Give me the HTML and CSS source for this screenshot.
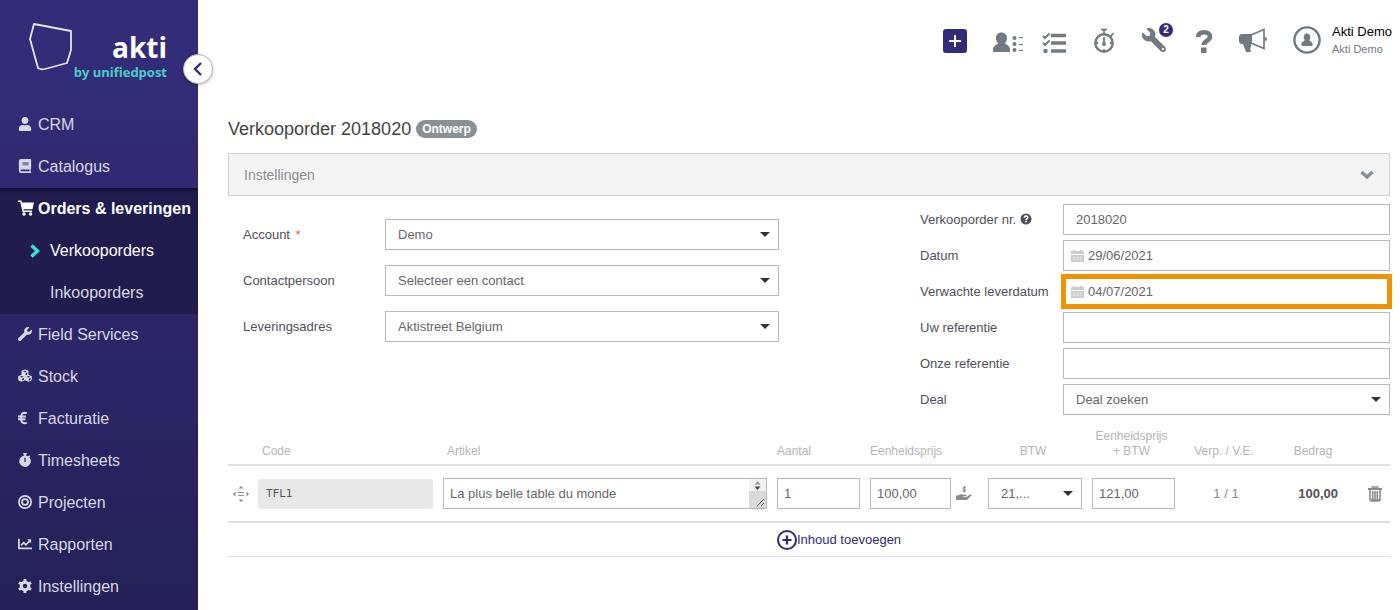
FILE: index.html
```html
<!DOCTYPE html>
<html lang="nl">
<head>
    <meta charset="UTF-8">
    <meta name="viewport" content="width=device-width, initial-scale=1.0">
    <title>Verkooporder 2018020</title>
    <link rel="stylesheet" href="styles.css">
</head>
<body>
    <aside class="sidebar">
        <a href="#" class="logo">
            <svg class="logo-shape" width="44" height="50" viewBox="0 0 44 50"><path d="M5 2 42 9v19l-4 13-22 6q-4 1-7-1L1 17z" fill="none" stroke="#e6e5f0" stroke-width="1.800" stroke-linejoin="round"/></svg>
            <span class="logo-text">
                <span class="logo-name">akti</span>
                <span class="logo-sub">by unifiedpost</span>
            </span>
        </a>
        <button type="button" class="sidebar-toggle" aria-label="Menu inklappen">
            <svg width="10" height="14" viewBox="0 0 10 14"><path d="M8 1 2 7l6 6" fill="none" stroke="#322b78" stroke-width="2.400"/></svg>
        </button>
        <nav>
            <ul class="menu">
                <li><a href="#">
                    <svg class="menu-icon" viewBox="0 0 448 512"><path d="M224 256c70.700 0 128-57.300 128-128S294.700 0 224 0 96 57.300 96 128s57.300 128 128 128zm89.600 32h-16.700c-22.200 10.200-46.900 16-72.900 16s-50.600-5.800-72.900-16h-16.700C60.200 288 0 348.200 0 422.400V464c0 26.500 21.500 48 48 48h352c26.500 0 48-21.500 48-48v-41.600c0-74.200-60.200-134.400-134.400-134.400z"/></svg>
                    CRM</a></li>
                <li><a href="#">
                    <svg class="menu-icon" viewBox="0 0 14 16"><path fill-rule="evenodd" d="M2.500 0H14v11.500l-.6.500v2l.6.500V16H2.500A2.500 2.500 0 0 1 0 13.500v-11A2.500 2.500 0 0 1 2.500 0zM4 4v1h7V4zm0 2.200v1h7v-1zM3 12a1 1 0 0 0 0 2h9v-2z"/></svg>
                    Catalogus</a></li>
                <li class="menu-open">
                    <a href="#" class="menu-active">
                        <svg class="menu-icon" viewBox="0 0 16 16"><path d="M0 .5h3.400l.5 2H16l-1.600 6.700H5.400l.3 1.300h8.400v1.500H4.500L2.300 2H0z"/><circle cx="6" cy="14" r="1.700"/><circle cx="12.600" cy="14" r="1.700"/></svg>
                        Orders &amp; leveringen</a>
                    <ul class="submenu">
                        <li><a href="#" class="submenu-active">
                            <svg width="10" height="14" viewBox="0 0 10 14"><path d="M1.500 1.500 7.500 7l-6 5.500" fill="none" stroke="#40e0d0" stroke-width="3.400"/></svg>
                            Verkooporders</a></li>
                        <li><a href="#">Inkooporders</a></li>
                    </ul>
                </li>
                <li><a href="#">
                    <svg class="menu-icon" viewBox="0 0 512 512"><path d="M507.730 109.100c-2.240-9.030-13.540-12.090-20.120-5.510l-74.360 74.360-67.880-11.310-11.310-67.880 74.360-74.360c6.620-6.620 3.430-17.900-5.660-20.160-47.380-11.740-99.550.91-136.580 37.930-39.640 39.640-50.550 97.100-34.050 147.200L18.740 402.760c-24.990 24.990-24.990 65.510 0 90.500 24.990 24.990 65.510 24.990 90.500 0l213.210-213.210c50.120 16.710 107.470 5.680 147.370-34.220 37.070-37.070 49.700-89.320 37.910-136.730z"/></svg>
                    Field Services</a></li>
                <li><a href="#">
                    <svg class="menu-icon" viewBox="0 0 16 16"><path fill-rule="evenodd" d="M8 .5 12 2v4.600l3.800 1.600v4.600L12 14.600l-4-1.800-4 1.800-3.800-1.800V8.200L4 6.600V2zM8 2 5.700 2.900 8 3.800l2.300-.9zm.7 3v2.200l2-.9V4.100zM4.200 8 2 8.900l2.200.9 2.200-.9zm.6 3v2.200l2-.9v-2.200zm7-3-2.200.9 2.200.9 2.200-.9zm.6 3v2.200l2-.9v-2.200z"/></svg>
                    Stock</a></li>
                <li><a href="#">
                    <svg class="menu-icon" viewBox="0 0 16 16"><path d="M10 2.800A5 5 0 0 0 7.500 2C5 2 3.500 4.500 3.500 8s1.500 6 4 6a5 5 0 0 0 2.500-.8M0 6.300h9M0 9.500h8.500" fill="none" stroke="currentColor" stroke-width="2.300"/></svg>
                    Facturatie</a></li>
                <li><a href="#">
                    <svg class="menu-icon" viewBox="0 0 14 16"><path fill-rule="evenodd" d="M5 0h4v1.600H8v1.200l2.600.9 1.200-1.200 1.100 1.100-1 1.200A6.600 6.600 0 1 1 6 2.800V1.600H5zm1.300 5.500v4.800h1.400V5.500z"/></svg>
                    Timesheets</a></li>
                <li><a href="#">
                    <svg class="menu-icon" viewBox="0 0 16 16"><g fill="none" stroke="currentColor" stroke-width="2"><circle cx="8" cy="8" r="7"/><circle cx="8" cy="8" r="3.400"/></g></svg>
                    Projecten</a></li>
                <li><a href="#">
                    <svg class="menu-icon" viewBox="0 0 16 16"><path d="M1 2v11h15M3.500 9.500 6.500 6.500l2.500 2.500 4.500-4.500" fill="none" stroke="currentColor" stroke-width="2"/><path d="M10.500 2.500H15V7z"/></svg>
                    Rapporten</a></li>
                <li><a href="#">
                    <svg class="menu-icon" viewBox="0 0 16 16"><circle cx="8" cy="8" r="4.300" fill="none" stroke="currentColor" stroke-width="3.600"/><path d="M8 0v3M8 13v3M1.100 4l2.600 1.500M12.300 10.500l2.600 1.500M1.100 12l2.600-1.500M12.300 5.500 14.900 4" stroke="currentColor" stroke-width="3.400"/></svg>
                    Instellingen</a></li>
            </ul>
        </nav>
    </aside>

    <div class="content">
        <header class="topbar">
            <button type="button" class="top-button" aria-label="Nieuw">
                <svg width="50" height="40" viewBox="0 0 50 40"><rect x="13" y="9" width="24" height="24" rx="3" fill="#322b78"/><path d="M25 15v12M19 21h12" stroke="#fff" stroke-width="2"/></svg>
            </button>
            <button type="button" class="top-button" aria-label="Contacten">
                <svg width="50" height="40" viewBox="0 0 50 40"><path d="M21.500 12.500c3.500 0 5.500 2.400 5.500 5.500 0 2.500-.8 4-2 5.200.5 1.300 5 2.200 5 6V31c0 .6-.4 1-1 1H14c-.6 0-1-.4-1-1v-1.800c0-3.800 4.500-4.700 5-6-1.200-1.200-2-2.700-2-5.200 0-3.100 2-5.500 5.500-5.500z"/><circle cx="34.500" cy="18" r="2"/><circle cx="34.500" cy="24" r="2"/><circle cx="34.500" cy="30" r="2"/><path d="M39 17.500h4M39 24.500h4M39 30.500h4" stroke="currentColor"/></svg>
            </button>
            <button type="button" class="top-button" aria-label="Taken">
                <svg width="50" height="40" viewBox="0 0 50 40"><path d="M21 15.500H36M21 23H36M21 31H36" stroke="currentColor" stroke-width="3.400"/><path d="m13 16 2 2 4.500-4.500M13 23l2 2 4.500-4.500" fill="none" stroke="currentColor" stroke-width="2"/><circle cx="15.500" cy="31" r="2.200"/></svg>
            </button>
            <button type="button" class="top-button" aria-label="Tijdregistratie">
                <svg width="50" height="40" viewBox="0 0 50 40"><circle cx="24" cy="23" r="8.700" fill="none" stroke="currentColor" stroke-width="2.400"/><path d="M21 9.700h6M24 10v4M30.500 16.500l3-3.500M24 17v6M24 29v2M16 23h2M30 23h2" stroke="currentColor" stroke-width="1.800"/><circle cx="24" cy="24" r="2"/></svg>
            </button>
            <button type="button" class="top-button" aria-label="Meldingen">
                <svg width="50" height="40" viewBox="0 0 50 40"><path transform="translate(36 8) scale(-.047 .047)" d="M507.730 109.100c-2.240-9.030-13.540-12.090-20.120-5.510l-74.360 74.360-67.880-11.310-11.310-67.880 74.360-74.360c6.620-6.620 3.430-17.900-5.660-20.160-47.380-11.740-99.550.91-136.580 37.930-39.640 39.640-50.550 97.100-34.050 147.200L18.740 402.760c-24.990 24.990-24.990 65.510 0 90.500 24.990 24.990 65.510 24.990 90.500 0l213.210-213.210c50.120 16.710 107.470 5.680 147.370-34.220 37.070-37.070 49.700-89.320 37.910-136.730zM64 472c-13.250 0-24-10.750-24-24 0-13.260 10.750-24 24-24s24 10.740 24 24c0 13.250-10.750 24-24 24z"/></svg>
                <span class="counter">2</span>
            </button>
            <button type="button" class="top-button" aria-label="Help">
                <svg width="50" height="40" viewBox="0 0 50 40"><path d="M18 17c.3-3.200 2.600-4.800 6-4.800 3.600 0 6 1.700 6 4.500 0 4.300-6.200 3.700-6.200 8.300" fill="none" stroke="currentColor" stroke-width="4.600"/><path d="M21 27.500h5.500V33H21z"/></svg>
            </button>
            <button type="button" class="top-button" aria-label="Nieuws">
                <svg width="50" height="40" viewBox="0 0 50 40"><path d="M11 14h11v10h-1v3l-1 1 1 4h-5l-3-8h-2l-2-2v-6z"/><path d="M21.500 14.800 34 9.500v19l-12.500-5.200" fill="none" stroke="currentColor" stroke-width="1.700"/><path d="M34.500 17c2 0 2.500 1 2.500 2s-.5 2-2.500 2z"/></svg>
            </button>
            <a href="#" class="user">
                <svg width="28" height="28" viewBox="0 0 28 28"><circle cx="14" cy="14" r="12.600" fill="none" stroke="currentColor" stroke-width="2.400"/><path d="M14 7.500c2.200 0 3.300 1.600 3.300 3.500 0 1.300-.4 2.500-1.100 3.200.3.900 3.300 1.200 3.300 4V20h-11v-1.800c0-2.800 3-3.100 3.300-4-.7-.7-1.100-1.900-1.100-3.200 0-1.900 1.100-3.500 3.300-3.500z"/></svg>
                <span class="user-text">
                    <span class="user-name">Akti Demo</span>
                    <span class="user-company">Akti Demo</span>
                </span>
            </a>
        </header>

        <main>
            <div class="title">
                <h1>Verkooporder 2018020</h1>
                <span class="status">Ontwerp</span>
            </div>

            <button type="button" class="panel-toggle">
                Instellingen
                <svg width="14" height="10" viewBox="0 0 14 10"><path d="m1.500 2 5.500 5 5.500-5" fill="none" stroke="#8a9195" stroke-width="3.400"/></svg>
            </button>

            <form>
                <div class="form-columns">
                    <div class="form-left">
                        <label for="account">Account <span class="required">*</span></label>
                        <div class="select">
                            <select id="account"><option>Demo</option></select>
                        </div>
                        <label for="contact">Contactpersoon</label>
                        <div class="select">
                            <select id="contact"><option>Selecteer een contact</option></select>
                        </div>
                        <label for="address">Leveringsadres</label>
                        <div class="select">
                            <select id="address"><option>Aktistreet Belgium</option></select>
                        </div>
                    </div>

                    <div class="form-right">
                        <label for="number">Verkooporder nr.
                            <svg class="help" width="12" height="12" viewBox="0 0 12 12"><circle cx="6" cy="6" r="5.500"/><path d="M4.200 4.700C4.300 3.500 5 3 6 3s1.800.6 1.800 1.500C7.800 5.700 6 5.700 6 7.200M6 8v1.500" fill="none" stroke="#fff" stroke-width="1.500"/></svg>
                        </label>
                        <input type="text" id="number" value="2018020">
                        <label for="date">Datum</label>
                        <div class="date">
                            <svg width="13" height="12" viewBox="0 0 13 12"><path d="M0 1h13v3H0zM2 0h2v2H2zM9 0h2v2H9zM0 5h13v7H0z" fill="#ccc"/><path d="M1 7.500h11M1 9.500h11M3.500 6v5M6.500 6v5M9.500 6v5" stroke="#dedede"/></svg>
                            <input type="text" id="date" value="29/06/2021">
                        </div>
                        <label for="delivery">Verwachte leverdatum</label>
                        <div class="date date-highlight">
                            <svg width="13" height="12" viewBox="0 0 13 12"><path d="M0 1h13v3H0zM2 0h2v2H2zM9 0h2v2H9zM0 5h13v7H0z" fill="#ccc"/><path d="M1 7.500h11M1 9.500h11M3.500 6v5M6.500 6v5M9.500 6v5" stroke="#dedede"/></svg>
                            <input type="text" id="delivery" value="04/07/2021">
                        </div>
                        <label for="your-ref">Uw referentie</label>
                        <input type="text" id="your-ref">
                        <label for="our-ref">Onze referentie</label>
                        <input type="text" id="our-ref">
                        <label for="deal">Deal</label>
                        <div class="select">
                            <select id="deal"><option>Deal zoeken</option></select>
                        </div>
                    </div>
                </div>

                <table class="lines">
                    <colgroup>
                        <col class="col-handle">
                        <col class="col-code">
                        <col>
                        <col class="col-small">
                        <col class="col-price">
                        <col class="col-vat">
                        <col class="col-small">
                        <col class="col-pack">
                        <col class="col-total">
                        <col class="col-delete">
                    </colgroup>
                    <thead>
                        <tr>
                            <th></th>
                            <th class="indent">Code</th>
                            <th class="indent">Artikel</th>
                            <th>Aantal</th>
                            <th>Eenheidsprijs</th>
                            <th class="center">BTW</th>
                            <th class="center">Eenheidsprijs<br>+ BTW</th>
                            <th class="center">Verp. / V.E.</th>
                            <th class="center">Bedrag</th>
                            <th></th>
                        </tr>
                    </thead>
                    <tbody>
                        <tr>
                            <td class="handle">
                                <svg width="16" height="16" viewBox="0 0 16 16"><path d="M8 0l2.500 2.500h-5zM8 16l2.500-2.500h-5zM0 8l2.500-2.500v5zM16 8l-2.500-2.500v5zM5 6h6v1H5zM5 9h6v1H5z"/></svg>
                            </td>
                            <td><input type="text" class="code" value="TFL1" aria-label="Code" readonly></td>
                            <td>
                                <div class="article">
                                    <textarea rows="1" aria-label="Artikel">La plus belle table du monde</textarea>
                                    <svg width="17" height="29" viewBox="0 0 17 29"><path d="M0 0h17v12H0z" fill="#f1f1f1"/><path d="M0 12h17v17H0z" fill="#dadada"/><path d="M5.500 5.500 8.500 2l3 3.500z" fill="#999"/><path d="m5.500 7.500 3 3.500 3-3.500z" fill="#444"/><path d="m8 27 7-7M12 27l3-3" stroke="#555"/></svg>
                                </div>
                            </td>
                            <td><input type="text" value="1" aria-label="Aantal"></td>
                            <td>
                                <div class="price">
                                    <input type="text" value="100,00" aria-label="Eenheidsprijs">
                                    <button type="button" class="icon-button" aria-label="Korting">
                                        <svg width="16" height="16" viewBox="0 0 16 16"><path d="M0 9.500h2.200C3.600 8.300 5 8.200 6.200 8.500l3.800.3c.8.200.8 1.400 0 1.500H7v.6h3.500l3.500-2.400c.9-.5 2 .5 1.200 1.300l-3.700 3.600c-.5.500-1 .7-1.800.7H0z"/><path d="M10 1.500C7.500.8 6 2.600 8 3.300s2 2.500-1.500 1.700M8.200 0v6.500" fill="none" stroke="currentColor" stroke-width="1.100"/></svg>
                                    </button>
                                </div>
                            </td>
                            <td>
                                <div class="select">
                                    <select aria-label="BTW"><option>21,...</option></select>
                                </div>
                            </td>
                            <td><input type="text" value="121,00" aria-label="Eenheidsprijs + BTW"></td>
                            <td class="center pack">1 / 1</td>
                            <td class="total">100,00</td>
                            <td class="delete">
                                <button type="button" class="icon-button" aria-label="Verwijderen">
                                    <svg width="14" height="16" viewBox="0 0 14 16"><path d="M0 2h14v2H0z"/><path d="M4.500 2.500V1h5v1.500M2 4v9.500q0 1.500 1.500 1.500h7q1.500 0 1.500-1.500V4M2 14h10M4.700 5v9M7 5v9M9.300 5v9" fill="none" stroke="currentColor" stroke-width="1.600"/></svg>
                                </button>
                            </td>
                        </tr>
                    </tbody>
                    <tfoot>
                        <tr>
                            <td colspan="3"></td>
                            <td colspan="7">
                                <button type="button" class="add-button">
                                    <svg width="20" height="20" viewBox="0 0 20 20"><circle cx="10" cy="10" r="9" fill="none" stroke="#322b78" stroke-width="2"/><path d="M10 5.500v9M5.500 10h9" stroke="#322b78" stroke-width="2.200"/></svg>
                                    Inhoud toevoegen
                                </button>
                            </td>
                        </tr>
                    </tfoot>
                </table>
            </form>
        </main>
    </div>
</body>
</html>
```

FILE: styles.css
```css
* {
    margin: 0;
    padding: 0;
    box-sizing: border-box;
}

body {
    display: flex;
    min-height: 100vh;
    font-family: "Liberation Sans", Arial, sans-serif;
    font-size: 13px;
    background-color: #fff;
    color: #505057;
}

button, input, select, textarea {
    font-family: inherit;
    font-size: 13px;
}

button {
    border: none;
    background: none;
    cursor: pointer;
}

a {
    color: inherit;
    text-decoration: none;
}

svg {
    display: block;
    flex-shrink: 0;
    fill: currentColor;
}

/* Sidebar */
.sidebar {
    position: relative;
    flex: 0 0 198px;
    background: linear-gradient(#332c79 0, #322b76 104px, #242057 100%);
    color: #d8d7e5;
}

.logo {
    display: flex;
    height: 104px;
    padding: 22px 31px 0 29px;
}

.logo-text {
    display: flex;
    flex: 1;
    flex-direction: column;
    align-items: flex-end;
    padding-top: 8px;
    font-family: "Open Sans", sans-serif;
    font-weight: bold;
    white-space: nowrap;
}

.logo-name {
    font-size: 28px;
    line-height: 34px;
    color: #fff;
}

.logo-sub {
    font-size: 13px;
    line-height: 16px;
    color: #44cfc8;
}

.sidebar-toggle {
    position: absolute;
    top: 54px;
    right: -15px;
    display: flex;
    align-items: center;
    justify-content: center;
    width: 30px;
    height: 30px;
    border: 1px solid #bbb;
    border-radius: 50%;
    background-color: #fff;
    box-shadow: 0 1px 3px rgba(0, 0, 0, 0.3);
}

.menu, .submenu {
    list-style: none;
}

.menu a {
    display: flex;
    align-items: center;
    gap: 6px;
    height: 42px;
    padding-left: 18px;
    font-size: 16px;
    white-space: nowrap;
}

.menu a:hover {
    color: #fff;
}

.menu-icon {
    width: 14px;
    height: 14px;
    margin-bottom: 3px;
}

.menu-active .menu-icon {
    width: 16px;
    height: 16px;
    margin-right: -2px;
}

.menu-open {
    background-color: #211c4e;
    box-shadow: inset 0 6px 4px -4px rgba(0, 0, 0, 0.5);
}

.menu .menu-active {
    font-weight: bold;
    color: #fff;
}

.submenu a {
    padding-left: 50px;
}

.menu .submenu-active {
    gap: 10px;
    padding-left: 30px;
    color: #fff;
}

/* Top bar */
.content {
    flex: 1;
    min-width: 0;
}

.topbar {
    display: flex;
    align-items: center;
    justify-content: flex-end;
    height: 80px;
    padding-right: 8px;
    color: #727a80;
}

.top-button {
    position: relative;
    width: 50px;
    color: #727a80;
}

.counter {
    position: absolute;
    top: 3px;
    right: 7px;
    width: 14px;
    height: 14px;
    border-radius: 7px;
    background-color: #322b78;
    color: #fff;
    font-size: 10px;
    font-weight: bold;
    line-height: 14px;
    text-align: center;
}

.user {
    display: flex;
    align-items: center;
    gap: 11px;
    padding-left: 13px;
}

.user-text {
    display: flex;
    flex-direction: column;
}

.user-name {
    color: #000;
    line-height: 18px;
}

.user-company {
    font-size: 11px;
    line-height: 16px;
}

/* Page */
main {
    padding: 37px 10px 20px 30px;
}

.title {
    display: flex;
    align-items: center;
    gap: 5px;
    margin-bottom: 12px;
}

h1 {
    font-size: 18px;
    font-weight: normal;
    line-height: 24px;
    color: #444;
}

.status {
    padding: 0 6px;
    border-radius: 9px;
    background-color: #8a9195;
    color: #fff;
    font-size: 12px;
    font-weight: bold;
    line-height: 18px;
}

.panel-toggle {
    display: flex;
    align-items: center;
    justify-content: space-between;
    width: 100%;
    height: 43px;
    padding: 0 15px;
    border: 1px solid #d2d2d2;
    background-color: #f4f4f4;
    color: #8a8f92;
    font-size: 14px;
}

/* Form */
.form-columns {
    display: grid;
    grid-template-columns: 551fr 470fr;
    column-gap: 141px;
    padding-top: 8px;
}

.form-left, .form-right {
    display: grid;
    align-items: center;
    align-content: start;
}

.form-left {
    grid-template-columns: 142px 1fr;
    row-gap: 15px;
    padding: 15px 0 0 15px;
}

.form-right {
    grid-template-columns: 143px 1fr;
    row-gap: 5px;
}

label {
    white-space: nowrap;
}

.required {
    margin-left: 2px;
    color: #e8505b;
}

.help {
    display: inline-block;
    vertical-align: -1px;
}

input, select, textarea {
    display: block;
    width: 100%;
    height: 31px;
    padding: 0 12px;
    border: 1px solid #b9b9b9;
    border-radius: 0;
    background-color: #fff;
    color: #666;
}

select {
    appearance: none;
}

.select {
    position: relative;
}

.select::after {
    content: "";
    position: absolute;
    top: 13px;
    right: 9px;
    border: 5px solid transparent;
    border-top-color: #333;
    border-bottom: none;
    pointer-events: none;
}

.date {
    display: flex;
    align-items: center;
    gap: 4px;
    height: 31px;
    padding-left: 7px;
    border: 1px solid #b9b9b9;
}

.date input {
    height: 29px;
    padding: 0;
    border: none;
    background: none;
}

.date-highlight {
    outline: 5px solid #f39200;
    outline-offset: -3px;
}

/* Order lines */
.lines {
    width: 100%;
    margin-top: 14px;
    border-spacing: 0;
    table-layout: fixed;
}

.col-handle { width: 25px; }
.col-code { width: 185px; }
.col-small { width: 93px; }
.col-price { width: 118px; }
.col-vat { width: 104px; }
.col-pack { width: 92px; }
.col-total { width: 86px; }
.col-delete { width: 32px; }

.lines th {
    padding: 0 5px 5px;
    border-bottom: 2px solid #dfdfe4;
    color: #b5b5b5;
    font-size: 12px;
    font-weight: normal;
    line-height: 15px;
    text-align: left;
    vertical-align: bottom;
}

.lines td {
    padding: 12px 5px;
    border-bottom: 2px solid #dfdfe4;
}

.lines th.indent {
    padding-left: 9px;
}

.lines .center {
    text-align: center;
}

.lines th.center {
    padding-right: 9px;
}

.lines td.handle {
    padding-right: 0;
    color: #8a9195;
}

.lines input, .lines textarea {
    padding: 0 6px;
}

.lines .code {
    height: 30px;
    padding: 0 8px;
    border: none;
    border-radius: 3px;
    background-color: #e8e8e8;
    color: #555;
    font-family: "DejaVu Sans Mono", monospace;
    font-size: 11px;
}

.article {
    display: flex;
    border: 1px solid #b9b9b9;
}

.lines textarea {
    height: 29px;
    border: none;
    line-height: 29px;
    resize: none;
    overflow: hidden;
}

.price {
    display: flex;
    align-items: center;
    gap: 5px;
}

.price input {
    width: 81px;
}

.pack {
    color: #8a8a8a;
}

.lines .total {
    padding-right: 20px;
    font-weight: bold;
    text-align: right;
}

.lines .delete {
    padding-right: 8px;
}

.delete .icon-button {
    margin-left: auto;
}

.icon-button {
    display: block;
    color: #8a8d90;
}

.lines tfoot td {
    height: 34px;
    padding: 0 5px;
    border-bottom-width: 1px;
}

.add-button {
    display: flex;
    align-items: center;
    color: #322b78;
}
```
